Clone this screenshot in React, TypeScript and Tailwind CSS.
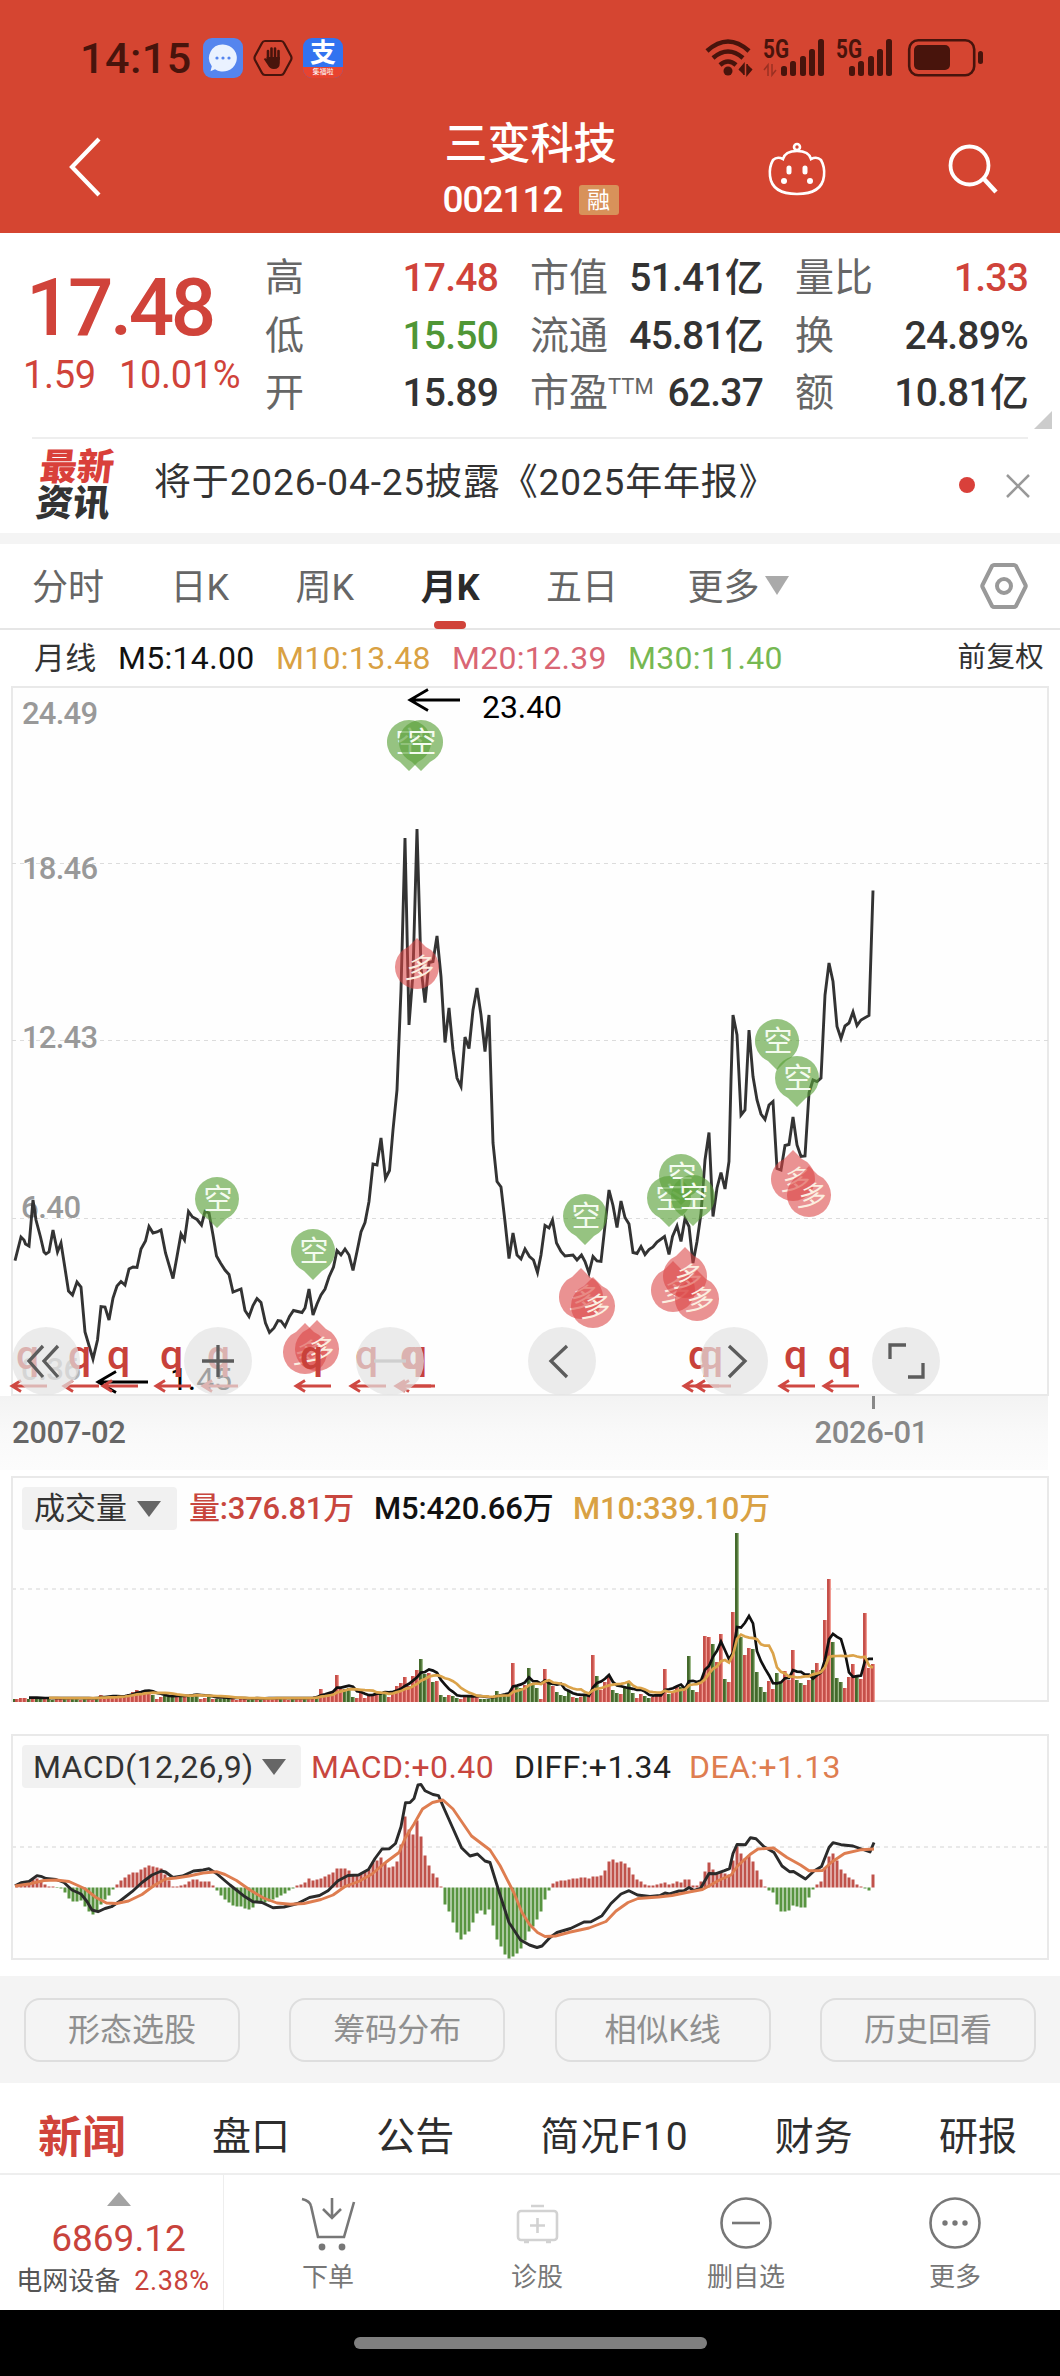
import React from 'react';

type Point = [number, number];

// x position of the n-th monthly bar, shared by all three panels
const barX = (i: number) => 13 + i * 4;

const PRICE = '15,1260.7 21,1237 24,1240 25.5,1244 29,1246 33,1200 36,1220 40.5,1237 44,1252 46,1254 49,1252 53,1230 57.5,1252 61,1243 64,1262 68.5,1291 72.5,1295 77,1282 81,1287 85,1332 93,1359 97.5,1340 101,1306.5 105,1307 109,1320 113,1298 117,1286 121,1281.5 125,1285 129,1269 133,1267 137,1267.5 141,1249 145.5,1241 149,1226.5 153,1233 157,1232 161,1230 165.5,1253 173,1278.5 177,1256.5 181,1234 184.5,1240 188.5,1211.5 192.5,1217 197,1219.5 201.5,1225 205,1211.5 209,1213 213,1235 216.5,1256 220.5,1263 225,1270 229,1274.5 233,1292 241,1289 245,1310.5 249,1316.5 253,1305.5 257,1298.5 261,1302.5 265.5,1323 269.5,1332.5 274,1328 278,1320.5 281,1321 285,1326.5 289.5,1316.5 293.5,1310.5 302,1312.5 305,1308 309,1289 313,1315 317,1304 321,1295 325,1289 329,1277 333.5,1267 337,1250.5 341,1255 345,1249 349,1255 353,1270.5 357,1251.5 361,1232 365,1222.5 369,1201.5 373,1164 377,1165 381,1138 385.5,1178.5 389.5,1170.5 393,1130 397,1090 401,990 405,838 409,1025 413,973 417,829 421,968 425,1002.5 429,962.5 433,961.5 437,936 441,976.5 445,1042.5 449,1008 453,1050 457,1078 461,1086.5 465,1037 469,1048.5 473,1010 477,988 481,1015 485,1051.5 489,1015 491,1080 493,1143 497,1181.5 501,1187 505,1221.5 509,1258.5 513,1233 517,1255 521,1259 525,1249 529.5,1256.5 533.5,1260 537.5,1272.5 541,1255 545,1225.5 549,1228 552.5,1220 556.5,1243 561,1251.5 565,1256 573,1255 577,1260 581.5,1255 585,1261.5 589,1273 593,1256.5 597,1261 601,1261.5 605,1225.5 609,1190 613,1205.5 617,1227.5 621,1201 625,1217.5 629,1224 633,1252.5 637,1253.5 641,1246.5 645,1254.5 649,1249.5 653,1247 657,1242 664.5,1236.5 669,1254.5 672.5,1236.5 677,1226 681,1241.5 685,1218.5 689,1226.5 693,1263 697,1241.5 701,1213.5 705,1160 709,1132.5 713,1216.5 717,1188 721,1172.5 725,1189 729,1161.5 731,1080 733,1015 737,1035 741,1115 745,1110 749,1030 753,1076.5 757,1100 761,1114 765,1119.5 769,1105 773,1101.5 777,1168.5 781,1170 785,1145.5 789,1144.5 793,1117 797,1145 801,1156.5 805,1156 809,1093 813,1080 817,1081.5 821,1078 825,995 829,963 833,981.5 837,1026.5 841,1038.5 845,1026 849,1023 853,1012 857,1025.5 861,1020 869,1015.5 873,890.5';

const DIFF = '15,1885.7 21,1882.7 29,1881.5 37,1875.7 42,1876.7 46,1878.5 56,1879.5 64,1882.5 72,1890 81,1894 87,1901.5 92,1910 98,1911.7 105,1908.5 111.5,1906.7 120,1901 132,1891.7 142,1882.5 152,1875 161.5,1871 165.5,1872 173,1877.5 182.5,1876 193.5,1871 203,1870 209,1868.7 216.5,1873.5 230,1885 243.5,1895.7 253,1901.7 262,1902.5 273,1907.7 284,1907 297.5,1903.5 309.5,1897.5 319.5,1895.5 328,1890.7 338,1880.7 348,1875.5 358.5,1875 368.5,1869.5 375,1858.5 382,1849 389.5,1848.7 395.5,1843.5 401,1826.7 405.5,1802.7 410,1802.5 414,1798.5 418,1785 421,1784.5 425,1790.7 433,1794.5 438.5,1795.7 444.5,1809.5 453,1828.5 461.5,1847.7 470,1856 477.5,1854 485,1861 490,1862.5 498.5,1890 509,1922.5 520.5,1940 529.5,1945 537,1947.5 542,1946 550,1937.5 557,1932.5 570.5,1928.5 584,1922 591,1921.7 602,1915.7 611,1903.5 621,1894 629,1890.7 637.5,1895 650,1896.5 660,1895.5 665,1893 669.5,1894 679,1891 684,1890.7 689,1887.5 694,1890.5 700.5,1888.5 709,1873.5 716,1873.7 724.5,1870.7 729.5,1868.7 733,1853.5 737,1844.5 745.5,1844.7 750.5,1837.7 756,1838.7 764,1846.7 774,1852.5 782,1866 789.5,1871.7 793.5,1871.5 805.5,1879 814,1871 821.5,1866.5 829,1847.5 833,1842.7 841,1844.7 853,1846 870,1852 874,1842.5';

const DEA = '15,1886 30.5,1883.7 44,1880.5 56,1880 69,1881.5 84.5,1888.5 96,1897.5 106.5,1903 116.5,1903.5 128.5,1901 142,1894.5 154,1885.5 165.5,1879 176,1878 189,1876 203,1873 216.5,1871.7 225,1874.5 236.5,1880.5 250,1890 263.5,1898 277,1903 290.5,1904.3 304,1903.5 321,1899.5 333,1895 345,1886.5 358.5,1881.5 372,1874 385.5,1862.5 399,1852.5 405.5,1837.5 414,1824 422.5,1809 432.5,1802.5 443,1800 453,1809 471.5,1836 490,1850 500,1865.5 514,1893 522,1912.5 529.5,1924.5 537.5,1932.5 545,1936.5 555.5,1936 570.5,1932 589,1928 606,1921.5 616,1911 628,1902.5 638,1898.5 658.5,1897 672,1895.5 689,1892 702.5,1889.5 719.5,1880 731,1875 738,1865.5 750,1854.5 758,1849 773.5,1848 787,1857.5 800.5,1865 809,1870.7 822.5,1870.5 831,1862.5 844.5,1853.5 861.5,1849.7 874,1849';

// bar height; negative = month closed down
const VOLUME = [
  -3, 3, 4, 4, -3, 3, -3, -3, 3, -3, -2, 3, 3, -3, 3, -3, -3, 2, -3, 3, 2, -4, 7, 4, 5, 4, 5, 5, 6, 8,
  10, 12, 9, 12, 9, -7, 3, 5, -6, -5, -5, 5, -5, 6, -6, -7, -8, 3, 4, -5, 3, -3, -3, -4, -3, 3, 2, 3, 3, -2,
  -3, 3, -2, 3, 3, 3, 3, -3, 3, 2, -3, 3, 3, -3, 3, 4, -6, 13, 8, 9, 10, 27, 13, -13, -14, -5, 4, 9, 4, 7,
  7, 10, -10, -11, 5, 10, 16, 19, 25, 16, 26, 32, -43, -28, 29, -20, 21, -7, -5, 7, -6, -4, 3, 5, -6, 5, 5, -3, -3, -3,
  -4, -11, -8, -7, -8, 39, -15, -14, 17, -34, -19, -14, 3, 33, -20, 16, -10, -7, -6, -11, 5, -4, 5, -6, 6, 47, -26, 12, 20, 25,
  -12, -9, 8, -15, -20, -9, 4, 8, -6, -4, 5, 6, 7, 33, -8, 10, 16, -15, 12, -46, -12, 10, 22, 66, 65, -58, 40, 68, -23, 20,
  90, -169, -65, 47, 54, -53, -30, -15, -10, 21, 13, -29, -20, 31, 22, 52, -22, -19, 17, 22, -32, 39, 32, 82, 123, -60, -24, -20, 14, 25,
  38, -27, 23, 89, 34, 38,
];

const MACD = [
  0, 2, 3, 3, 4, 8, 9, 6, 3, 1, 1, -0.5, -1, -5, -11, -14, -14, -13, -19, -24, -27, -24, -17, -12, -8, -2, 3, 7, 10, 13,
  15, 15, 18, 20, 22, 21, 20, 19, 13, 7, 1, 1, 2, 3, 6, 8, 8, 6, 6, 6, 2, -3, -8, -12, -15, -18, -19, -19, -21, -22,
  -20, -15, -14, -15, -14, -12, -10, -8, -6, -3, -1, 2, 3, 5, 9, 7, 8, 9, 11, 13, 15, 19, 19, 19, 17, 12, 12, 14, 16, 18,
  25, 27, 30, 25, 20, 21, 26, 43, 71, 58, 53, 67, 51, 32, 22, 14, 10, 1, -17, -24, -35, -45, -52, -47, -44, -35, -26, -23, -27, -22,
  -38, -52, -59, -67, -71, -69, -66, -61, -53, -44, -39, -32, -24, -12, -3, 4, 6, 7, 7, 8, 9, 9, 10, 10, 9, 11, 11, 12, 17, 26,
  28, 25, 26, 24, 20, 13, 8, 6, 3, 2, 2, 3, 4, 5, 3, 4, 6, 5, 8, 8, 2, 2, 6, 16, 25, 18, 15, 15, 14, 13,
  27, 41, 34, 29, 32, 26, 17, 8, 1, -3, -5, -17, -24, -24, -23, -18, -19, -20, -20, -10, -2, 3, 6, 20, 31, 34, 27, 18, 14, 10,
  8, 3, 1, -1, -3, 13,
];

const SHORTS: Point[] = [[409, 742], [421, 742], [217, 1199], [313, 1251], [585, 1216], [669, 1198], [681, 1176], [693, 1197], [777, 1041], [797, 1078]];
const LONGS: Point[] = [[417, 967], [305, 1352], [317, 1349], [581, 1297], [593, 1306], [673, 1290], [685, 1276], [697, 1299], [793, 1179], [809, 1195]];
const DIVIDENDS = [11, 63, 102, 155, 202, 295, 350, 395, 399, 683, 695, 779, 823];

const movingAverage = (data: number[], span: number) =>
  data
    .map((_, i) => {
      if (i < span - 1) return null;
      const sum = data.slice(i - span + 1, i + 1).reduce((a, b) => a + Math.abs(b), 0);
      return `${barX(i)},${(1701 - sum / span).toFixed(1)}`;
    })
    .filter(Boolean)
    .join(' ');

const StatusBar = () => (
  <div className="flex h-[116px] items-center pl-20 pr-[70px] text-[#48140c]">
    <span className="w-[123px] text-[43px] font-medium leading-none tracking-[0.5px]">14:15</span>
    <svg className="h-10 w-10" viewBox="0 0 40 40">
      <rect width="40" height="40" rx="9" fill="#5585ee" />
      <path d="M20 6.500a14 13.500 0 1 1 -8 24.700l-4.500 2 1.300-5A13.500 13.500 0 0 1 20 6.500z" fill="#eaf2ff" />
      <circle cx="14" cy="20" r="1.600" fill="#5585ee" />
      <circle cx="20" cy="20" r="1.600" fill="#5585ee" />
      <circle cx="26" cy="20" r="1.600" fill="#5585ee" />
    </svg>
    <svg className="ml-[10px] h-10 w-10" viewBox="0 0 40 40" fill="none" stroke="#48140c">
      <path d="M12 3h16q2 0 3 2l7 13q1 2 0 4l-7 13q-1 2-3 2H12q-2 0-3-2L2 22q-1-2 0-4L9 5q1-2 3-2z" strokeWidth="2.200" />
      <path d="M15 21V13M18.500 20V10.500M22 20V10.500M25.500 21V13" strokeWidth="2.600" strokeLinecap="round" />
      <path d="M13.700 19h13.100v6q0 6-6 6-4 0-6-4l-4-6q1.500-1.500 2.900 0z" fill="#48140c" stroke="none" />
    </svg>
    <div className="ml-[10px] flex h-10 w-10 flex-col items-center rounded-[9px] bg-[#3273f0] text-white">
      <span className="h-[29px] text-[26px] font-bold leading-[30px]">支</span>
      <span className="h-[11px] w-full rounded-b-[9px] bg-[#e8432f] text-center text-[7px] leading-[11px]">集福啦</span>
    </div>
    <svg className="ml-auto h-10 w-[290px] overflow-visible" viewBox="700 38 290 40" fill="none" stroke="#48140c">
      <path d="M707 51Q728 32 749 51M713 58Q728 45 743 58M720 65Q728 58 736 65" strokeWidth="4.500" />
      <circle cx="728" cy="71" r="4.500" fill="#48140c" stroke="none" />
      <path d="M739 70l5-6v11M747 64v11l5-6" strokeWidth="1.500" fill="#48140c" />
      <g fill="#48140c" stroke="none" fontSize="25" fontWeight="700">
        <text x="763" y="57.500" textLength="26" lengthAdjust="spacingAndGlyphs">5G</text>
        <text x="836" y="57.500" textLength="26" lengthAdjust="spacingAndGlyphs">5G</text>
      </g>
      <path d="M764 70l4-5v11M772 64v11l4-5" stroke="#9a3022" strokeWidth="1.500" />
      {[0, 68].map((dx) => (
        <g key={dx} fill="#48140c" stroke="none">
          {[[781, 66], [790, 61], [800, 56], [809, 49], [818, 39]].map(([x, y]) => (
            <rect key={x} x={x + dx} y={y} width="6" height={76 - y} rx="2.500" />
          ))}
        </g>
      ))}
      <rect x="909.200" y="40.200" width="65" height="35" rx="9" strokeWidth="2.600" />
      <rect x="914" y="45" width="36" height="25" rx="5" fill="#48140c" stroke="none" />
      <rect x="978" y="51" width="5" height="13" rx="2.500" fill="#48140c" stroke="none" />
    </svg>
  </div>
);

const TitleBar = () => (
  <div className="flex h-[117px] items-start justify-between pl-[66px] pr-[60px] text-white">
    <svg className="mt-[20px] h-[62px] w-[40px]" viewBox="0 0 40 62" fill="none" stroke="white" strokeWidth="4.200">
      <path d="M33 3L6 31l27 28" />
    </svg>
    <div className="ml-[188px] flex w-[230px] flex-col items-center">
      <h1 className="mt-[3px] text-[43px] font-medium leading-[50px]">三变科技</h1>
      <div className="mt-[13px] flex items-center gap-4">
        <span className="text-[37px] font-medium leading-9 tracking-[-1px]">002112</span>
        <span className="flex h-[30px] w-10 items-center justify-center rounded-[3px] bg-[#d8925a] text-[23px] leading-none">融</span>
      </div>
    </div>
    <div className="flex gap-[120px]">
      <svg className="mt-[24px] h-14 w-[60px]" viewBox="767 140 60 56" fill="none" stroke="white" strokeWidth="2.600">
        <circle cx="797" cy="147" r="3" />
        <path d="M797 151q-12 0-14 8-6-3-10 1-4 7-3 16 2 18 27 18t27-18q1-9-3-16-4-4-10-1-2-8-14-8z" />
        <path d="M789 168v4M805 168v4" strokeWidth="5" strokeLinecap="round" />
        <circle cx="784" cy="181" r="3" fill="white" stroke="none" />
        <circle cx="810" cy="181" r="3" fill="white" stroke="none" />
      </svg>
      <svg className="mt-[27px] h-[52px] w-[53px]" viewBox="947 143 53 52" fill="none" stroke="white" strokeWidth="3.800">
        <circle cx="969.500" cy="165.500" r="19" />
        <path d="M984 179l12 13" strokeWidth="4.500" />
      </svg>
    </div>
  </div>
);

interface StatProps {
  label: string;
  value: string;
  sup?: string;
  color?: string;
}

const Stat: React.FC<StatProps> = ({ label, value, sup, color = 'text-[#333]' }) => (
  <div className="flex h-[57.500px] items-center justify-between">
    <span className="flex text-[39px] leading-none text-[#666]">
      {label}
      {sup && <sup className="top-0 mt-[2px] text-[22px] leading-none">{sup}</sup>}
    </span>
    <span className={`text-[39px] font-medium leading-none tracking-[-0.8px] ${color}`}>{value}</span>
  </div>
);

const Quote = () => (
  <section className="relative h-[204px]">
    <div className="flex pt-[17px]">
      <div className="w-[265px] pl-[23px] text-[#d0433a]">
        <div className="mt-[23px] pl-[3px] text-[80px] font-medium leading-[70px] tracking-[-3.5px]">17.48</div>
        <div className="mt-[12px] flex gap-[23px] whitespace-nowrap text-[38px] leading-10 tracking-[-0.3px]">
          <span>1.59</span>
          <span>10.01%</span>
        </div>
      </div>
      <div className="grid w-[763px] grid-cols-3 gap-x-8">
        <Stat label="高" value="17.48" color="text-[#d0433a]" />
        <Stat label="市值" value="51.41亿" />
        <Stat label="量比" value="1.33" color="text-[#d0433a]" />
        <Stat label="低" value="15.50" color="text-[#4f9636]" />
        <Stat label="流通" value="45.81亿" />
        <Stat label="换" value="24.89%" />
        <Stat label="开" value="15.89" />
        <Stat label="市盈" sup="TTM" value="62.37" />
        <Stat label="额" value="10.81亿" />
      </div>
    </div>
    <svg className="absolute right-2 top-[178px] h-[18px] w-[18px]" viewBox="0 0 18 18">
      <path d="M18 0v18H0z" fill="#ccc" />
    </svg>
  </section>
);

const NewsStrip = () => (
  <section className="mx-8 flex h-[96px] items-center border-t-2 border-[#eee]">
    <div className="ml-[6px] w-[116px] -skew-x-6 text-[37px] font-black leading-[36px]">
      <div className="text-[#d9403a]">最新</div>
      <div className="text-[#333]">资讯</div>
    </div>
    <p className="-mt-[7px] text-[37px] leading-none tracking-[0.85px] text-[#333]">将于2026-04-25披露《2025年年报》</p>
    <span className="ml-auto mt-[-2px] h-4 w-4 rounded-full bg-[#d9403a]" />
    <svg className="-mr-[2px] ml-[31px] h-6 w-6" viewBox="0 0 24 24" stroke="#999" strokeWidth="2.500">
      <path d="M1 1l22 22M23 1L1 23" />
    </svg>
  </section>
);

const PERIODS = ['分时', '日K', '周K', '月K', '五日', '更多'];

const PeriodTabs = () => (
  <nav className="flex h-[86px] items-center border-b-2 border-[#e6e6e6] pl-8 pr-8 text-[36px] leading-none text-[#666]">
    <div className="flex gap-[66.500px] pt-[3px]">
      {PERIODS.map((p) => (
        <span key={p} className={p === '月K' ? 'relative font-bold text-[#2a2a2a]' : p === '更多' ? 'pl-[3px]' : ''}>
          {p}
          {p === '月K' && <i className="absolute -bottom-[23px] left-1/2 h-2 w-8 -translate-x-1/2 rounded-full bg-[#d0433a]" />}
        </span>
      ))}
    </div>
    <svg className="ml-[5px] h-5 w-6" viewBox="0 0 24 20">
      <path d="M0 0h24L12 19z" fill="#aaa" />
    </svg>
    <svg className="ml-auto h-12 w-12" viewBox="0 0 48 48" fill="none" stroke="#999" strokeWidth="4">
      <path d="M14 3h20q1 0 2 1l9.500 19q.5 1 0 2L36 44q-1 1-2 1H14q-1 0-2-1L2.500 25q-.5-1 0-2L12 4q1-1 2-1z" />
      <circle cx="24" cy="24" r="7" />
    </svg>
  </nav>
);

const AverageLegend = () => (
  <div className="flex h-14 items-center pl-[34px] pr-4 text-[32px] leading-none tracking-[0.3px]">
    <span className="w-[84px] text-[31px] text-[#333]">月线</span>
    <span className="w-[158px] text-[#111]">M5:14.00</span>
    <span className="w-[176px] text-[#d9a143]">M10:13.48</span>
    <span className="w-[176px] text-[#d96674]">M20:12.39</span>
    <span className="text-[#76b852]">M30:11.40</span>
    <span className="ml-auto text-[28.500px] text-[#333]">前复权</span>
  </div>
);

const ShortMark = ({ x, y }: { x: number; y: number }) => (
  <g>
    <path d={`M${x - 9} ${y + 20}A22 22 0 1 1 ${x + 9} ${y + 20}L${x} ${y + 29}z`} fill="#5ba13a" fillOpacity=".64" />
    <text x={x + 1} y={y + 11} textAnchor="middle" fontSize="29" fill="#f4fbef">空</text>
  </g>
);

const LongMark = ({ x, y }: { x: number; y: number }) => (
  <g>
    <path d={`M${x - 9} ${y - 20}A22 22 0 1 0 ${x + 9} ${y - 20}L${x} ${y - 29}z`} fill="#db4343" fillOpacity=".58" />
    <text x={x + 1} y={y + 11} textAnchor="middle" fontSize="28" fontStyle="italic" fill="#fbeee0">多</text>
  </g>
);

const LeftArrow = ({ x, y, len, head, color }: { x: number; y: number; len: number; head: number; color: string }) => (
  <path d={`M${x + len} ${y}H${x + 2}M${x + head} ${y - head * 0.55}L${x + 1} ${y}l${head - 1} ${head * 0.55}`} fill="none" stroke={color} strokeWidth="2.800" />
);

const CONTROLS = [
  'M31 19L17 34l14 16M46 19L32 34l14 16',
  'M18 34h32M34 18v32',
  'M18 34h32',
  'M39 19L23 34l16 16',
  'M29 19l16 15-16 16',
  'M18 32V18h16M36 50h15V36',
];

const PriceChart = () => (
  <div className="relative">
    <svg className="block h-[710px] w-[1060px]" viewBox="0 686 1060 710">
      <rect x="12" y="687" width="1036" height="708" fill="#fefefe" stroke="#e9e9e9" strokeWidth="2" />
      <path d="M12 863.500H1048M12 1040.500H1048M12 1218.500H1048" stroke="#dcdcdc" strokeDasharray="4 4" />
      <g fontSize="31" fontWeight="500" fill="#999">
        <text x="22" y="724" textLength="76">24.49</text>
        <text x="22" y="879" textLength="76">18.46</text>
        <text x="22" y="1048" textLength="76">12.43</text>
        <text x="21" y="1218" textLength="60">6.40</text>
        <text x="21" y="1380" textLength="60" fill="#b5b5b5">0.36</text>
      </g>
      <polyline points={PRICE} fill="none" stroke="#333" strokeWidth="2.900" />
      <LeftArrow x={409} y={700} len={51} head={19} color="#000" />
      <text x="482" y="718" fontSize="32" textLength="80">23.40</text>
      <LeftArrow x={97} y={1382} len={51} head={19} color="#000" />
      <text x="170" y="1390" fontSize="32" textLength="62">1.45</text>
      {SHORTS.map(([x, y]) => <ShortMark key={`${x}-${y}`} x={x} y={y} />)}
      {LONGS.map(([x, y]) => <LongMark key={`${x}-${y}`} x={x} y={y} />)}
      {DIVIDENDS.map((x) => (
        <g key={x}>
          <text x={x + 5} y="1369" fontSize="41" fontWeight="500" fill="#c8413a">q</text>
          <LeftArrow x={x} y={1386} len={36} head={10} color="#cf4842" />
        </g>
      ))}
    </svg>
    <div className="absolute left-3 top-[641px] flex gap-[104px]">
      {CONTROLS.map((d, i) => (
        <button key={d} className="h-[68px] w-[68px] rounded-full bg-[#e3e3e3]/70">
          <svg viewBox="0 0 68 68" fill="none" stroke={i === 2 ? '#cfcfcf' : '#5c5c5c'} strokeWidth="3.300">
            <path d={d} />
          </svg>
        </button>
      ))}
    </div>
    <div className="mr-3 h-[74px] bg-gradient-to-b from-[#f3f3f3] via-[#f9f9f9] to-[#fcfcfc] text-[31px] font-medium leading-none tracking-[-0.4px]">
      <div className="ml-[872px] h-[13px] w-[3px] bg-[#888]" />
      <div className="mt-[8px] flex justify-between pl-3 pr-[120px]">
        <span className="text-[#666]">2007-02</span>
        <span className="text-[#888]">2026-01</span>
      </div>
    </div>
  </div>
);

const IndicatorLabel = ({ width, children }: { width: string; children: React.ReactNode }) => (
  <div className={`flex h-[43px] items-center gap-[10px] rounded bg-[#f1f1f1] pl-3 text-[#333] ${width}`}>
    {children}
    <svg className="h-4 w-6" viewBox="0 0 24 16">
      <path d="M0 0h24L12 16z" fill="#666" />
    </svg>
  </div>
);

const VolumeChart = () => (
  <section className="relative mt-[6px] h-[226px]">
    <svg className="block h-[226px] w-[1060px]" viewBox="0 1476 1060 226">
      <rect x="12" y="1477" width="1036" height="224" fill="#fefefe" stroke="#e9e9e9" strokeWidth="2" />
      <path d="M12 1589H1048" stroke="#e9e9e9" strokeWidth="2" strokeDasharray="4 4" />
      {VOLUME.map((v, i) => {
        const h = Math.abs(v);
        const x = Math.max(barX(i), 15);
        return (
          <g key={i}>
            <rect x={x - 2} y={1702 - h} width="4" height={h} fill={v > 0 ? '#f09a92' : '#9db98a'} />
            <rect x={x - 2} y={1702 - h} width="2.700" height={h} fill={v > 0 ? '#c6504a' : '#446a2c'} />
          </g>
        );
      })}
      <polyline points={movingAverage(VOLUME, 5)} fill="none" stroke="#111" strokeWidth="2.700" />
      <polyline points={movingAverage(VOLUME, 10)} fill="none" stroke="#dba34a" strokeWidth="2.700" />
    </svg>
    <div className="absolute left-[22px] top-[11px] flex items-center whitespace-nowrap text-[31px] leading-none">
      <IndicatorLabel width="w-[155px]"><span>成交量</span></IndicatorLabel>
      <span className="ml-3 w-[185px] font-medium tracking-[-0.2px] text-[#c8463e]">量:376.81万</span>
      <span className="w-[199px] font-medium tracking-[-0.1px] text-[#111]">M5:420.66万</span>
      <span className="font-medium tracking-[-0.1px] text-[#d9a143]">M10:339.10万</span>
    </div>
  </section>
);

const MacdChart = () => (
  <section className="relative mt-8 h-[226px]">
    <svg className="block h-[226px] w-[1060px]" viewBox="0 1734 1060 226">
      <rect x="12" y="1735" width="1036" height="224" fill="#fefefe" stroke="#e9e9e9" strokeWidth="2" />
      <path d="M12 1847H1048" stroke="#e9e9e9" strokeWidth="2" strokeDasharray="4 4" />
      {MACD.map((v, i) => (
        <rect key={i} x={barX(i) - 1.5} y={v > 0 ? 1887.5 - v : 1887.5} width="3" height={Math.abs(v)} fill={v > 0 ? '#c0524b' : '#589440'} />
      ))}
      <polyline points={DIFF} fill="none" stroke="#2b2b2b" strokeWidth="2.900" strokeLinejoin="round" />
      <polyline points={DEA} fill="none" stroke="#de7d50" strokeWidth="2.900" strokeLinejoin="round" />
    </svg>
    <div className="absolute left-[22px] top-[11px] flex items-center whitespace-nowrap text-[32px] leading-none tracking-[0.4px]">
      <IndicatorLabel width="w-[279px]"><span className="-ml-[1px] w-[219px]">MACD(12,26,9)</span></IndicatorLabel>
      <span className="ml-[10px] w-[203px] text-[#c8463e]">MACD:+0.40</span>
      <span className="w-[175px] text-[#222]">DIFF:+1.34</span>
      <span className="text-[#de7d50]">DEA:+1.13</span>
    </div>
  </section>
);

const Tools = () => (
  <div className="mt-4 flex h-[107px] items-center justify-between bg-[#f4f4f4] px-6">
    {['形态选股', '筹码分布', '相似K线', '历史回看'].map((t) => (
      <button key={t} className="h-16 w-[216px] rounded-2xl border-[2.500px] border-[#dedede] text-[32px] leading-none text-[#8f8f8f]">{t}</button>
    ))}
  </div>
);

const InfoTabs = () => (
  <nav className="flex h-[92px] items-center justify-between border-b-2 border-[#eee] pl-[38px] pr-[43px] pt-[19px] text-[39px] leading-none text-[#2d2d2d]">
    <span className="text-[44px] font-bold text-[#d0433a]">新闻</span>
    {['盘口', '公告', '简况F10', '财务', '研报'].map((t) => <span key={t} className={t === '简况F10' ? 'tracking-[1px]' : ''}>{t}</span>)}
  </nav>
);

const ACTIONS = [
  { label: '下单', icon: <path d="M4 4q8 2 9 7l7 31h26l10-35M34 3v20M25 14l9 9 9-9" /> },
  { label: '诊股', icon: <><rect x="11" y="16" width="39" height="29" rx="3" /><path d="M24 11h13M30.500 23v15M23 30.500h15M17 47h5M39 47h5" /></> },
  { label: '删自选', icon: <><circle cx="30" cy="28" r="24.500" /><path d="M16 28h28" /></> },
  { label: '更多', icon: <circle cx="30" cy="28" r="24.500" /> },
];

const BottomBar = () => (
  <footer className="flex h-[135px]">
    <div className="flex w-[224px] flex-col items-center border-r border-[#eee] pl-[14px] text-[#c8433c]">
      <svg className="mt-[17px] h-[14px] w-6" viewBox="0 0 24 14">
        <path d="M12 0l12 14H0z" fill="#a3a3a3" />
      </svg>
      <span className="mt-[13px] text-[37px] leading-10">6869.12</span>
      <div className="-ml-[11px] mt-[7px] flex items-center gap-[14px] whitespace-nowrap text-[26px] leading-[30px]">
        <span className="text-[#555]">电网设备</span>
        <span className="text-[27px] tracking-[0.6px]">2.38%</span>
      </div>
    </div>
    {ACTIONS.map((a, i) => (
      <div key={a.label} className="flex w-[209px] flex-col items-center pr-[1px] text-[26px] leading-[30px] text-[#777]">
        <svg className="mt-5 h-[58px] w-[60px]" viewBox="0 0 60 58" fill="none" stroke={i === 1 ? '#d2d2d2' : '#777'} strokeWidth="2.600">
          {a.icon}
          {i === 0 && <g fill="#777" stroke="none"><circle cx="24" cy="52" r="3.400" /><circle cx="44" cy="52" r="3.400" /></g>}
          {i === 3 && <g fill="#777" stroke="none"><circle cx="20" cy="28" r="2.700" /><circle cx="30" cy="28" r="2.700" /><circle cx="40" cy="28" r="2.700" /></g>}
        </svg>
        <span className="mt-[9px]">{a.label}</span>
      </div>
    ))}
  </footer>
);

export default function App() {
  return (
    <div className="h-[2376px] w-[1060px] overflow-hidden bg-white font-['Roboto','Noto_Sans_CJK_SC',sans-serif]">
      <header className="bg-[#d54531]">
        <StatusBar />
        <TitleBar />
      </header>
      <Quote />
      <NewsStrip />
      <div className="h-[11px] bg-[#f4f4f4]" />
      <PeriodTabs />
      <AverageLegend />
      <PriceChart />
      <VolumeChart />
      <MacdChart />
      <Tools />
      <InfoTabs />
      <BottomBar />
      <div className="flex h-[66px] items-center justify-center bg-black">
        <div className="h-3 w-[353px] rounded-full bg-[#7f7f7f]" />
      </div>
    </div>
  );
}
